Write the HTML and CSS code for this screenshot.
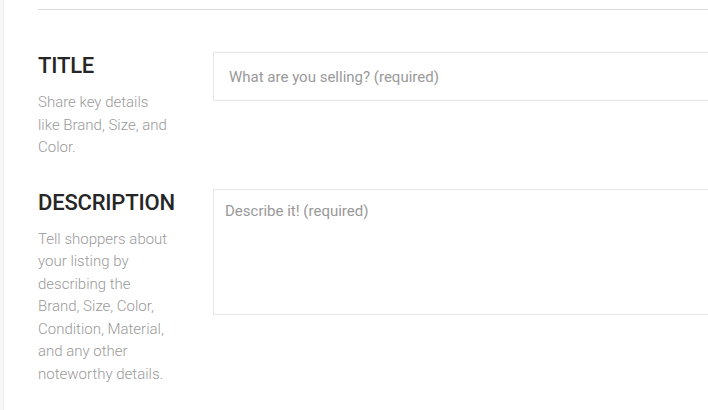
FILE: index.html
```html
<!DOCTYPE html>
<html lang="en">
<head>
<meta charset="utf-8">
<title>Listing details</title>
<link rel="stylesheet" href="styles.css">
</head>
<body>
  <main class="panel">
    <div class="divider"></div>
    <form class="listing-form">
      <section class="field-row">
        <div class="field-info">
          <h2 class="field-title">TITLE</h2>
          <p class="field-hint">Share key details like Brand, Size, and Color.</p>
        </div>
        <div class="field-control">
          <input class="text-input" type="text" placeholder="What are you selling? (required)">
        </div>
      </section>
      <section class="field-row">
        <div class="field-info">
          <h2 class="field-title">DESCRIPTION</h2>
          <p class="field-hint">Tell shoppers about your listing by describing the Brand, Size, Color, Condition, Material, and any other noteworthy details.</p>
        </div>
        <div class="field-control">
          <textarea class="text-area" placeholder="Describe it! (required)"></textarea>
        </div>
      </section>
    </form>
  </main>
</body>
</html>
```

FILE: styles.css
```css
html, body {
  margin: 0;
  padding: 0;
  height: 100%;
  overflow: hidden;
}

body {
  background: #f7f7f7;
  font-family: Roboto, "Liberation Sans", Arial, sans-serif;
}

.panel {
  margin-left: 3px;
  border-left: 1px solid #ececec;
  background: #fff;
  height: 100%;
  padding-left: 34px;
  padding-top: 9px;
  box-sizing: border-box;
  width: 760px;
}

.divider {
  height: 1px;
  background: #dcdcdc;
}

.listing-form {
  display: flex;
  flex-direction: column;
  gap: 30px;
  padding-top: 42px;
}

.field-row {
  display: grid;
  grid-template-columns: 175px 1fr;
  align-items: start;
}

.field-info {
  padding-top: 1px;
}

.field-title {
  margin: 0;
  font-size: 22px;
  font-weight: 500;
  line-height: 26px;
  color: #262626;
  letter-spacing: -0.2px;
}

.field-hint {
  margin: 12px 0 0;
  font-size: 15px;
  font-weight: 300;
  line-height: 22.5px;
  color: #9a9a9a;
  width: 134px;
}

.field-control {
  min-width: 0;
}

.text-input,
.text-area {
  display: block;
  width: 100%;
  box-sizing: border-box;
  border: 1px solid #e6e6e6;
  border-radius: 0;
  background: #fff;
  font-family: inherit;
  font-size: 15px;
  color: #333;
  outline: none;
}

.text-input {
  height: 49px;
  padding: 0 15px;
}

.text-area {
  height: 126px;
  padding: 11px 11px;
  resize: none;
  line-height: 20px;
}

.text-input::placeholder,
.text-area::placeholder {
  color: #999;
}
```
